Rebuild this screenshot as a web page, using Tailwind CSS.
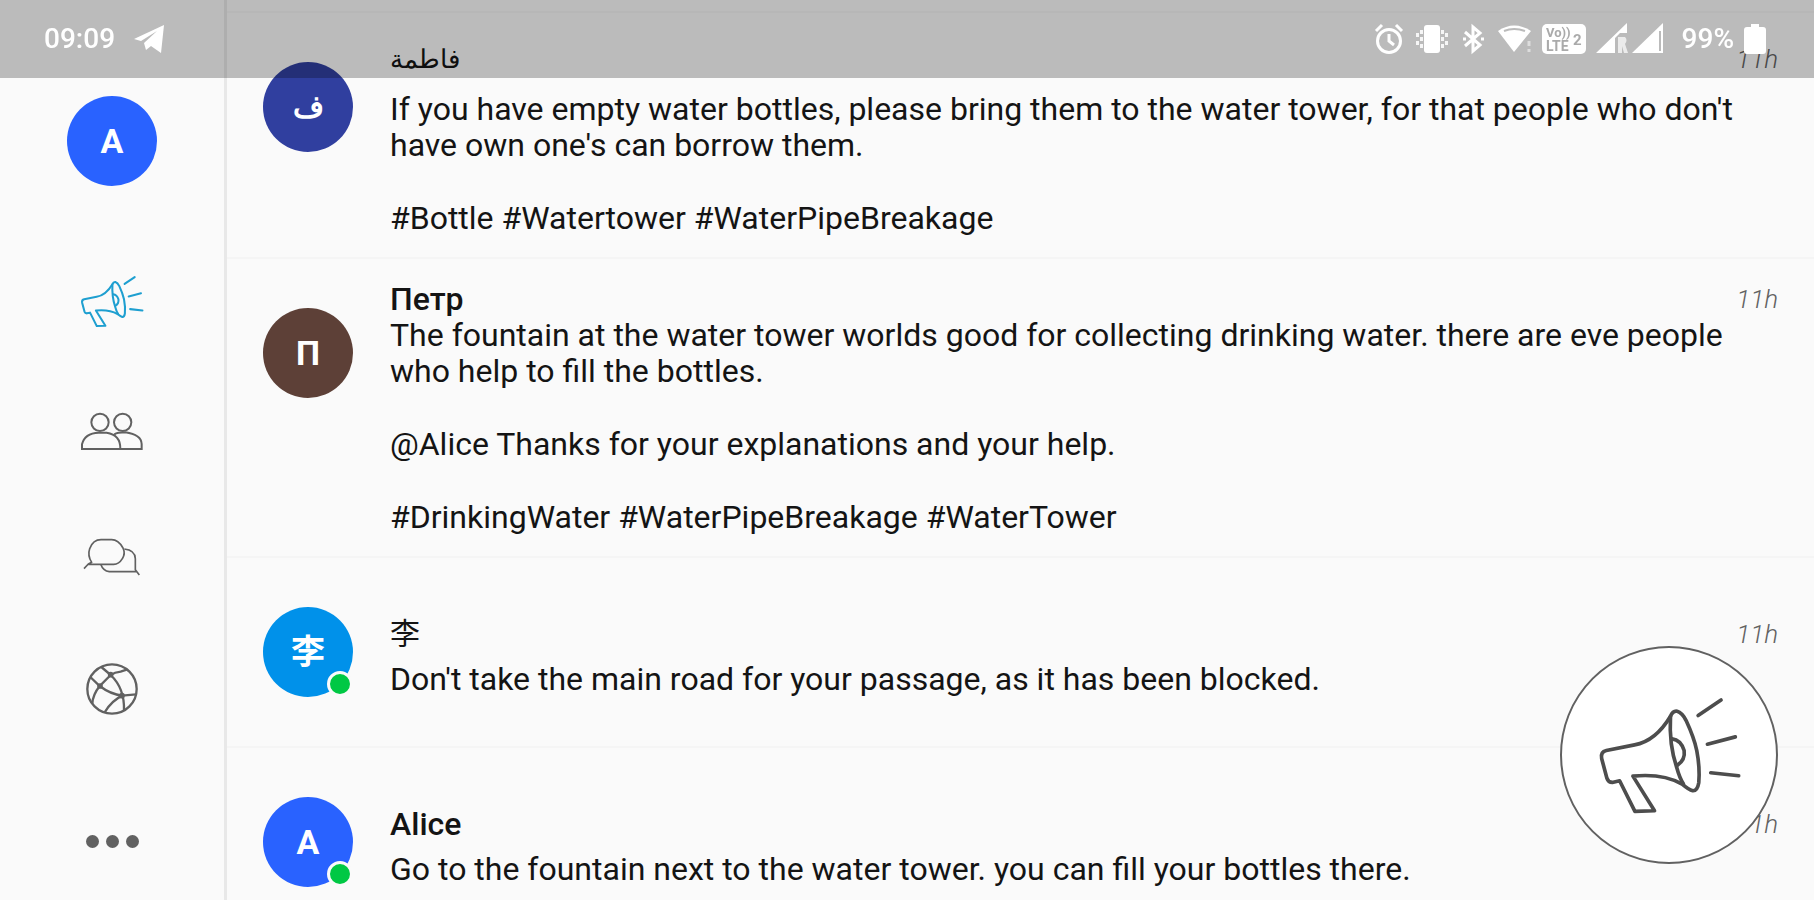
<!DOCTYPE html>
<html lang="en">
<head>
  <meta charset="UTF-8">
  <meta name="viewport" content="width=device-width, initial-scale=1.0">
  <title>Public Feed</title>
  <script src="https://cdn.jsdelivr.net/npm/@tailwindcss/browser@4"></script>
</head>
<body class="bg-[#fafafa] text-[#141414] font-['Roboto','Noto_Sans_CJK_SC',sans-serif] overflow-hidden">
  <!-- Shared megaphone icon -->
  <svg class="hidden">
    <symbol id="megaphone" viewBox="232 282 436 362">
      <g fill="none" stroke="currentColor" stroke-linecap="round" stroke-linejoin="round">
        <path d="M300 539 L278 544 Q266 544 262 532 L246 472 Q242 452 260 448 Q310 438 345 431 Q408 420 453 345 Q460 328 473 330 Q488 334 500 358 Q524 410 532 448 Q542 500 538 545 Q534 570 520 569 Q508 566 488 549 Q430 516 340 525 L405 629 L346 631 Z"/>
        <path d="M453 345 Q448 430 472 500 Q480 530 492 549"/>
        <path d="M458 413 Q484 416 494 448 Q498 476 474 492"/>
        <path d="M536 343 L605 296 M564 429 L648 407 M574 515 L658 524"/>
      </g>
    </symbol>
  </svg>

  <!-- Status bar -->
  <header class="fixed inset-x-0 top-0 z-20 h-[78px] bg-black/25 text-white text-[28px] font-medium flex items-center pl-11 pr-12 gap-2.5">
    <span>09:09</span>
    <svg class="w-8 h-8 ml-2" viewBox="0 0 32 32" fill="currentColor"><path d="M1 16 L31 2 L28 30 L18 23 L13 27 L11 20 L24 8 L8 18 Z"/></svg>
    <div class="flex-1"></div>
    <svg class="w-8 h-8" viewBox="0 0 32 32" fill="none" stroke="currentColor" stroke-width="3"><circle cx="16" cy="18" r="11.500"/><path d="M16 11 V18 L21 22 M3 8 L9 2 M29 8 L23 2"/></svg>
    <svg class="w-[34px] h-8" viewBox="0 0 34 32" fill="currentColor"><rect x="9" y="2" width="16" height="28" rx="3"/><path d="M5 7h3v4H5zM5 14h3v4H5zM5 21h3v4H5zM1 10h3v4H1zM1 18h3v4H1zM26 7h3v4h-3zM26 14h3v4h-3zM26 21h3v4h-3zM30 10h3v4h-3zM30 18h3v4h-3z" opacity=".85"/></svg>
    <svg class="w-7 h-8" viewBox="0 0 28 32" fill="none" stroke="currentColor" stroke-width="3"><path d="M6 9 L21 22 L14 28 V4 L21 10 L6 23"/><path d="M4 16h3M22 16h3"/></svg>
    <svg class="w-[35px] h-8" viewBox="0 0 35 32"><path d="M1 8 Q17 -3 34 8 L17 29 Z" fill="currentColor"/><path d="M7 8 Q17 4 28 8" fill="none" stroke="#bbb" stroke-width="2"/><path d="M32 18v5M32 26v3" stroke="#ddd" stroke-width="3"/></svg>
    <svg class="w-11 h-8" viewBox="0 0 44 32"><rect x="0" y="1" width="44" height="30" rx="5" fill="currentColor"/><g fill="#aaa" font-family="Roboto" font-weight="700"><text x="4" y="14" font-size="13">Vo))</text><text x="4" y="28" font-size="14">LTE</text><text x="31" y="22" font-size="15">2</text></g></svg>
    <div class="flex gap-1">
      <svg class="w-8 h-8" viewBox="0 0 32 32" fill="currentColor"><path d="M0 30 L31 0 V10 H24 L19 15 V30 Z"/><path d="M22 14 H29 Q32 17 29 21 L32 30 H28 L26 23 V30 H22 Z" opacity=".7"/></svg>
      <svg class="w-8 h-8" viewBox="0 0 32 32" fill="currentColor"><path d="M0 30 L31 0 V30 Z"/><path d="M28 8 V28" stroke="#bbb" stroke-width="2"/></svg>
    </div>
    <span class="ml-2">99%</span>
    <svg class="w-[22px] h-8" viewBox="0 0 22 32" fill="currentColor"><path d="M7 1h8v3h4q3 0 3 3v21q0 3-3 3H3q-3 0-3-3V7q0-3 3-3h4z"/></svg>
  </header>

  <div class="flex h-screen">
    <!-- Sidebar -->
    <aside class="w-[227px] shrink-0 border-r-3 border-[#e8e8e8] flex flex-col items-center pt-24 text-[#616161]">
      <button class="w-[90px] h-[90px] rounded-full bg-[#2962ff] text-white text-[34px] font-bold" aria-label="Profile">A</button>
      <nav class="mt-[50px] flex flex-col">
        <a href="#" aria-label="Public" class="h-[130px] w-24 flex items-center justify-center text-[#1e9fd0]">
          <svg class="w-16 h-[53px]" stroke-width="14"><use href="#megaphone"/></svg>
        </a>
        <a href="#" aria-label="Contacts" class="h-[130px] w-24 flex items-center justify-center">
          <svg class="w-16 h-10" viewBox="240 513 192 120" fill="none" stroke="currentColor" stroke-width="6"><circle cx="300" cy="547" r="26"/><circle cx="368" cy="547" r="26"/><path d="M246 627 V613 Q254 579 296 578 H320 Q362 584 361 627 Z M343 583 Q352 577 376 577 Q424 584 425 612 V627 H361"/></svg>
        </a>
        <a href="#" aria-label="Chats" class="h-[130px] w-24 flex items-center justify-center pb-2">
          <svg class="w-[58px] h-10" viewBox="246 105 174 120" fill="none" stroke="currentColor" stroke-width="5" stroke-linejoin="round"><path d="M249 200 L262 186 L272 181 Q259 160 266 140 Q276 113 300 113 H332 Q352 113 366 138 Q374 155 364 170 Q354 187 338 187 H262"/><path d="M370 141 Q402 144 403 170 V203 L415 219 M409 209 H325 Q306 206 300 188"/></svg>
        </a>
        <a href="#" aria-label="Network" class="h-[130px] w-24 flex items-center justify-center pb-1">
          <svg class="w-[54px] h-[54px]" viewBox="253 481 162 162" fill="none" stroke="currentColor" stroke-width="7"><circle cx="334" cy="562" r="74"/><path d="M302 496 L330 520 Q342 512 360 510 L378 504 M330 520 L297 553 L269 526 M297 553 Q276 580 275 606 M297 553 Q330 578 365 582 L406 578 M330 520 Q372 560 370 626 M365 582 Q334 596 312 632"/><circle cx="330" cy="519" r="5"/><circle cx="298" cy="553" r="5"/><circle cx="364" cy="582" r="5"/></svg>
        </a>
      </nav>
      <button class="mt-auto w-24 h-[118px] flex items-center justify-center gap-[7px]" aria-label="More">
        <span class="w-[13px] h-[13px] rounded-full bg-current"></span>
        <span class="w-[13px] h-[13px] rounded-full bg-current"></span>
        <span class="w-[13px] h-[13px] rounded-full bg-current"></span>
      </button>
    </aside>

    <!-- Feed -->
    <main class="flex-1 min-w-0 pt-[11px] text-[32px] leading-9">
      <div class="border-t-2 border-[#f5f5f5]">
        <article class="flex gap-[37px] pl-9 pr-9 pt-[22px] pb-[21px] border-b-2 border-[#f5f5f5]">
          <div class="shrink-0 mt-[27px] w-[90px] h-[90px] rounded-full bg-[#303f9f] text-white text-[30px] font-bold flex items-center justify-center">ف</div>
          <div class="flex-1 min-w-0">
            <div class="flex items-center justify-between leading-12 pb-2">
              <h2 class="text-[26px] font-medium">فاطمة</h2>
              <time class="text-[26px] font-light italic text-[#616161]">11h</time>
            </div>
            <p>If you have empty water bottles, please bring them to the water tower, for that people who don't have own one's can borrow them.</p>
            <p class="mt-[37px]">#Bottle #Watertower #WaterPipeBreakage</p>
          </div>
        </article>

        <article class="flex gap-[37px] pl-9 pr-9 pt-[22px] pb-[21px] border-b-2 border-[#f5f5f5]">
          <div class="shrink-0 mt-[27px] w-[90px] h-[90px] rounded-full bg-[#5d4037] text-white text-[34px] font-bold flex items-center justify-center">П</div>
          <div class="flex-1 min-w-0">
            <div class="flex items-center justify-between">
              <h2 class="font-medium">Петр</h2>
              <time class="text-[26px] font-light italic text-[#616161]">11h</time>
            </div>
            <p>The fountain at the water tower worlds good for collecting drinking water. there are eve people who help to fill the bottles.</p>
            <p class="mt-[37px]">@Alice Thanks for your explanations and your help.</p>
            <p class="mt-[37px]">#DrinkingWater #WaterPipeBreakage #WaterTower</p>
          </div>
        </article>

        <article class="flex gap-[37px] pl-9 pr-9 py-[49px] border-b-2 border-[#f5f5f5]">
          <div class="relative shrink-0 w-[90px] h-[90px] rounded-full bg-[#0091ea] text-white text-[34px] font-bold flex items-center justify-center">李
            <span class="absolute right-0 bottom-0 w-[26px] h-[26px] rounded-full bg-[#00c844] border-3 border-[#fafafa]"></span>
          </div>
          <div class="flex-1 min-w-0">
            <div class="flex items-center justify-between leading-[54px]">
              <h2 class="text-[30px]">李</h2>
              <time class="text-[26px] font-light italic text-[#616161]">11h</time>
            </div>
            <p>Don't take the main road for your passage, as it has been blocked.</p>
          </div>
        </article>

        <article class="flex gap-[37px] pl-9 pr-9 py-[49px]">
          <div class="relative shrink-0 w-[90px] h-[90px] rounded-full bg-[#2962ff] text-white text-[34px] font-bold flex items-center justify-center">A
            <span class="absolute right-0 bottom-0 w-[26px] h-[26px] rounded-full bg-[#00c844] border-3 border-[#fafafa]"></span>
          </div>
          <div class="flex-1 min-w-0">
            <div class="flex items-center justify-between leading-[54px]">
              <h2 class="font-medium">Alice</h2>
              <time class="text-[26px] font-light italic text-[#616161]">11h</time>
            </div>
            <p>Go to the fountain next to the water tower. you can fill your bottles there.</p>
          </div>
        </article>
      </div>
    </main>
  </div>

  <!-- New post button -->
  <button class="fixed right-9 bottom-9 z-10 w-[218px] h-[218px] rounded-full bg-white border-2 border-[#616161] text-[#4d4d4d] flex items-center justify-center" aria-label="New post">
    <svg class="w-[145px] h-[121px]" stroke-width="11"><use href="#megaphone"/></svg>
  </button>
</body>
</html>
